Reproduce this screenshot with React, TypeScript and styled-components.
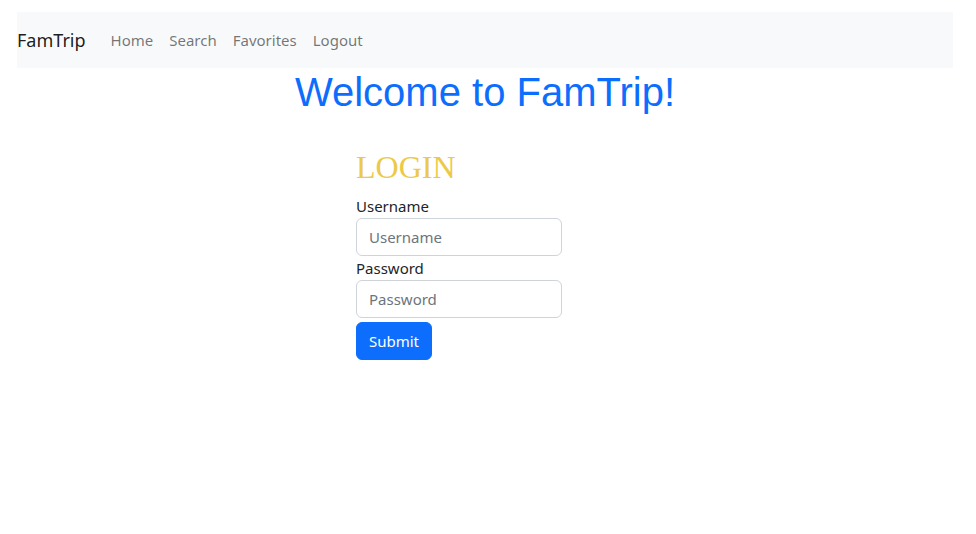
import React from "react";
import styled, { createGlobalStyle } from "styled-components";

const Global = createGlobalStyle`
  html, body { margin: 0; padding: 0; background: #fff; }
  body {
    font-family: "Segoe UI", "Noto Sans", "Open Sans", sans-serif;
    font-size: 15px;
    line-height: 1.5;
    color: #212529;
  }
  * { box-sizing: border-box; }
`;

const Page = styled.div`
  padding: 12px 23px 0 17px;
`;

const Navbar = styled.nav`
  display: flex;
  align-items: center;
  height: 56px;
  background: #f8f9fa;
`;

const Brand = styled.a`
  font-size: 18px;
  color: rgba(0, 0, 0, 0.9);
  text-decoration: none;
  margin-right: 17px;
  line-height: 1.5;
`;

const NavLink = styled.a`
  padding: 8px;
  color: rgba(0, 0, 0, 0.55);
  text-decoration: none;
  font-size: 15px;
`;

const Title = styled.h1`
  margin: 0;
  text-align: center;
  font-family: "Liberation Sans", Arial, sans-serif;
  font-weight: 400;
  font-size: 40px;
  line-height: 1.2;
  color: #0d6efd;
`;

const FormWrap = styled.form`
  display: flex;
  flex-direction: column;
  align-items: flex-start;
  width: 206px;
  margin: 32px 0 0 339px;
`;

const LoginTitle = styled.h2`
  margin: 0 0 8px;
  font-family: "Liberation Serif", "Times New Roman", serif;
  font-weight: 400;
  font-size: 32px;
  line-height: 1.2;
  color: #ecc94b;
`;

const Label = styled.label`
  font-size: 15px;
  line-height: 24px;
`;

const Input = styled.input`
  width: 206px;
  height: 38px;
  padding: 6px 12px;
  font-family: inherit;
  font-size: 15px;
  color: #212529;
  border: 1px solid #ced4da;
  border-radius: 6px;
  outline: none;
  &::placeholder { color: #6c757d; }
`;

const Button = styled.button`
  margin-top: 4px;
  width: 76px;
  height: 38px;
  padding: 6px 0;
  font-family: inherit;
  font-size: 15px;
  color: #fff;
  background: #0d6efd;
  border: 1px solid #0d6efd;
  border-radius: 6px;
  cursor: pointer;
`;

export default function App() {
  return (
    <Page>
      <Global />
      <Navbar>
        <Brand href="#">FamTrip</Brand>
        <NavLink href="#">Home</NavLink>
        <NavLink href="#">Search</NavLink>
        <NavLink href="#">Favorites</NavLink>
        <NavLink href="#">Logout</NavLink>
      </Navbar>
      <Title>Welcome to FamTrip!</Title>
      <FormWrap onSubmit={(e) => e.preventDefault()}>
        <LoginTitle>LOGIN</LoginTitle>
        <Label htmlFor="username">Username</Label>
        <Input id="username" placeholder="Username" />
        <Label htmlFor="password">Password</Label>
        <Input id="password" type="password" placeholder="Password" />
        <Button type="submit">Submit</Button>
      </FormWrap>
    </Page>
  );
}
